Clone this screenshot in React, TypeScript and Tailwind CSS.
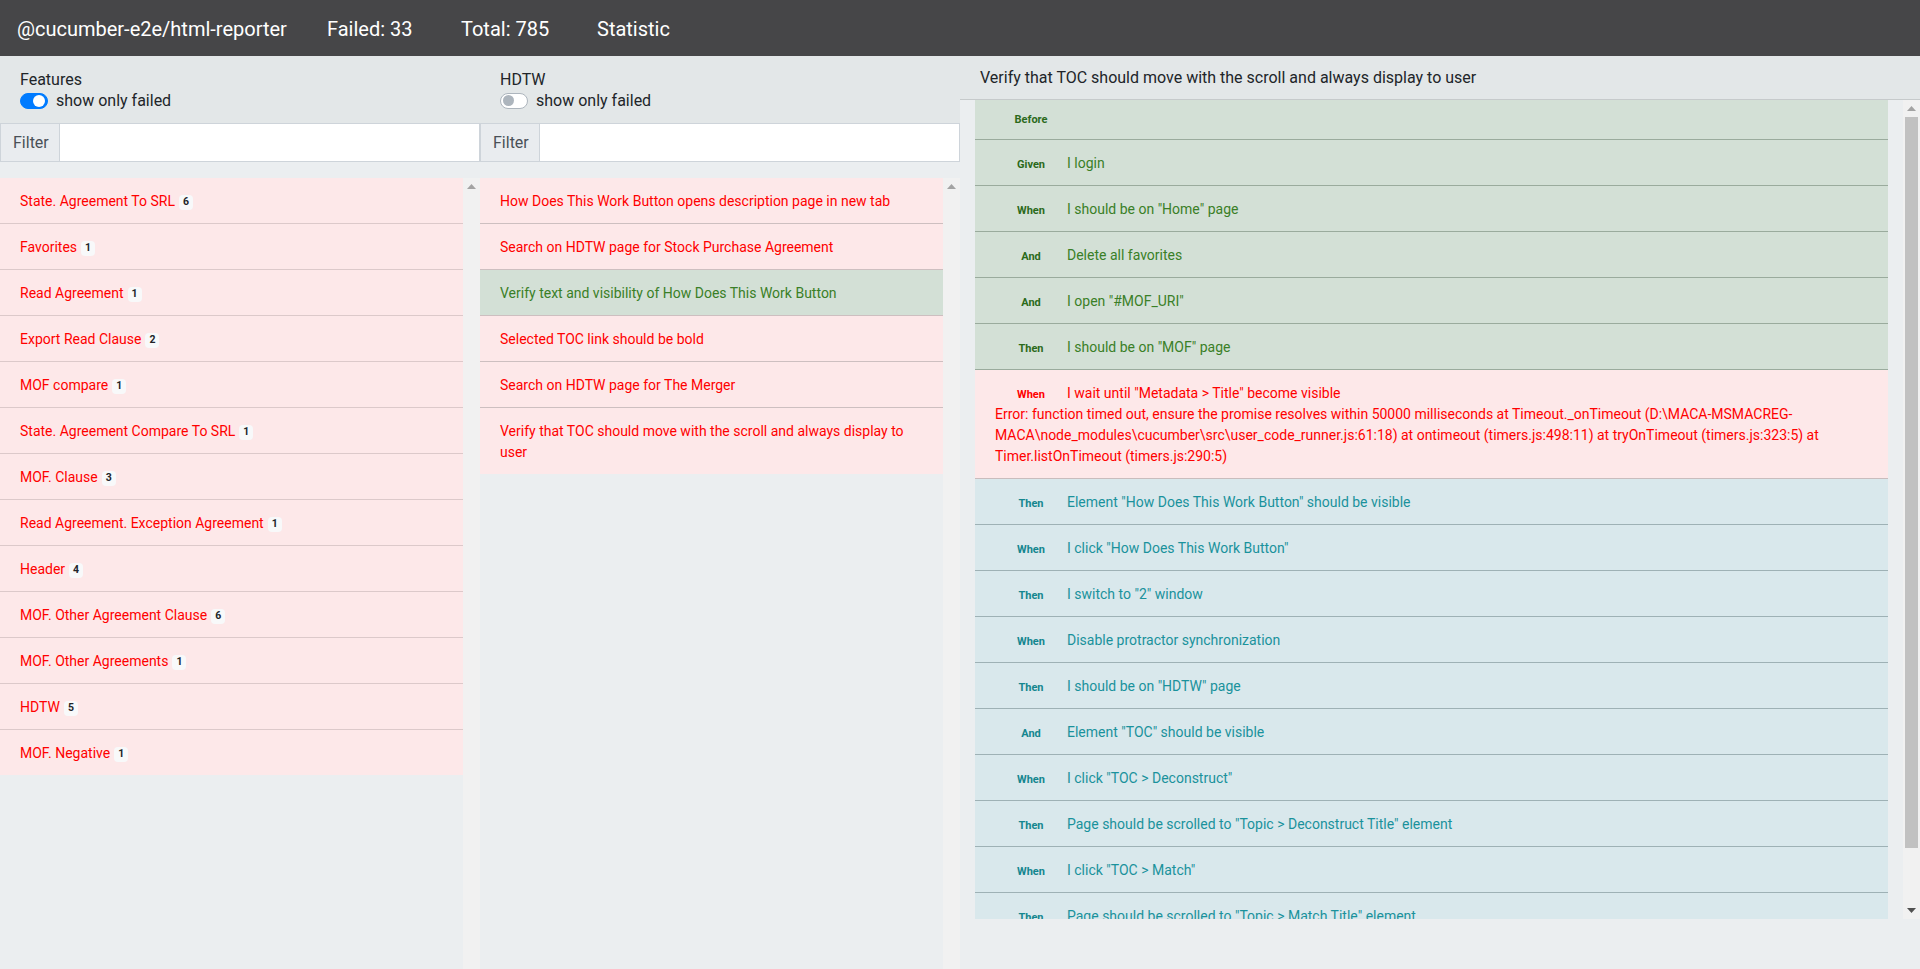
import React from "react";

type Feature = { name: string; count: number };

const features: Feature[] = [
  { name: "State. Agreement To SRL", count: 6 },
  { name: "Favorites", count: 1 },
  { name: "Read Agreement", count: 1 },
  { name: "Export Read Clause", count: 2 },
  { name: "MOF compare", count: 1 },
  { name: "State. Agreement Compare To SRL", count: 1 },
  { name: "MOF. Clause", count: 3 },
  { name: "Read Agreement. Exception Agreement", count: 1 },
  { name: "Header", count: 4 },
  { name: "MOF. Other Agreement Clause", count: 6 },
  { name: "MOF. Other Agreements", count: 1 },
  { name: "HDTW", count: 5 },
  { name: "MOF. Negative", count: 1 },
];

const scenarios: { name: string; passed: boolean }[] = [
  { name: "How Does This Work Button opens description page in new tab", passed: false },
  { name: "Search on HDTW page for Stock Purchase Agreement", passed: false },
  { name: "Verify text and visibility of How Does This Work Button", passed: true },
  { name: "Selected TOC link should be bold", passed: false },
  { name: "Search on HDTW page for The Merger", passed: false },
  { name: "Verify that TOC should move with the scroll and always display to user", passed: false },
];

type Status = "passed" | "failed" | "skipped";
type Step = { kw: string; text: string; status: Status; error?: string };

const steps: Step[] = [
  { kw: "Before", text: "", status: "passed" },
  { kw: "Given", text: "I login", status: "passed" },
  { kw: "When", text: 'I should be on "Home" page', status: "passed" },
  { kw: "And", text: "Delete all favorites", status: "passed" },
  { kw: "And", text: 'I open "#MOF_URI"', status: "passed" },
  { kw: "Then", text: 'I should be on "MOF" page', status: "passed" },
  {
    kw: "When",
    text: 'I wait until "Metadata > Title" become visible',
    status: "failed",
    error:
      "Error: function timed out, ensure the promise resolves within 50000 milliseconds at Timeout._onTimeout (D:\\MACA-MSMACREG-MACA\\node_modules\\cucumber\\src\\user_code_runner.js:61:18) at ontimeout (timers.js:498:11) at tryOnTimeout (timers.js:323:5) at Timer.listOnTimeout (timers.js:290:5)",
  },
  { kw: "Then", text: 'Element "How Does This Work Button" should be visible', status: "skipped" },
  { kw: "When", text: 'I click "How Does This Work Button"', status: "skipped" },
  { kw: "Then", text: 'I switch to "2" window', status: "skipped" },
  { kw: "When", text: "Disable protractor synchronization", status: "skipped" },
  { kw: "Then", text: 'I should be on "HDTW" page', status: "skipped" },
  { kw: "And", text: 'Element "TOC" should be visible', status: "skipped" },
  { kw: "When", text: 'I click "TOC > Deconstruct"', status: "skipped" },
  { kw: "Then", text: 'Page should be scrolled to "Topic > Deconstruct Title" element', status: "skipped" },
  { kw: "When", text: 'I click "TOC > Match"', status: "skipped" },
  { kw: "Then", text: 'Page should be scrolled to "Topic > Match Title" element', status: "skipped" },
  { kw: "After", text: "", status: "passed" },
];

function Arrow({ up, color }: { up: boolean; color: string }) {
  return (
    <div className="h-[17px] flex items-center justify-center shrink-0">
      <svg width="9" height="5" viewBox="0 0 9 5">
        {up ? <path d="M4.5 0 L9 5 L0 5 Z" fill={color} /> : <path d="M0 0 L9 0 L4.5 5 Z" fill={color} />}
      </svg>
    </div>
  );
}

function ScrollBar({ thumb }: { thumb?: number }) {
  return (
    <div className="w-[17px] shrink-0 bg-[#f1f1f1] flex flex-col">
      <Arrow up color="#a3a3a3" />
      {thumb ? (
        <>
          <div className="mx-[2px] bg-[#c1c1c1] shrink-0" style={{ height: thumb }} />
          <div className="flex-1" />
          <Arrow up={false} color="#505050" />
        </>
      ) : null}
    </div>
  );
}

function Toggle({ on }: { on: boolean }) {
  return on ? (
    <span className="inline-flex items-center justify-end w-[28px] h-[16px] rounded-full bg-[#007bff] border border-[#007bff] px-[2px]">
      <span className="block w-[12px] h-[12px] rounded-full bg-white" />
    </span>
  ) : (
    <span className="inline-flex items-center justify-start w-[28px] h-[16px] rounded-full bg-white border border-[#adb5bd] px-[2px]">
      <span className="block w-[11px] h-[11px] rounded-full bg-[#adb5bd]" />
    </span>
  );
}

function PanelHeader({ title, on }: { title: string; on: boolean }) {
  return (
    <div className="bg-[#e3e7e8] pl-5 pt-[15px] pb-[11px] text-[16px] text-[#212529]">
      <div className="leading-[18px]">{title}</div>
      <div className="flex items-center gap-2 h-[23px]">
        <Toggle on={on} />
        <span>show only failed</span>
      </div>
    </div>
  );
}

function FilterInput() {
  return (
    <div className="flex h-[39px] text-[16px]">
      <div className="w-[60px] flex items-center pl-3 bg-[#e9ecef] border border-[#ced4da] text-[#495057]">
        Filter
      </div>
      <div className="flex-1 bg-white border border-l-0 border-[#ced4da]" />
    </div>
  );
}

const stepStyle: Record<Status, { row: string; kw: string; text: string }> = {
  passed: {
    row: "bg-[#d3e0d6] border-[#9aab9d]",
    kw: "text-[#2b6a1b]",
    text: "text-[#3a7f27]",
  },
  failed: {
    row: "bg-[#fde8e9] border-[#c9bcbd]",
    kw: "text-[#ff0000]",
    text: "text-[#ff0000]",
  },
  skipped: {
    row: "bg-[#d9e8ec] border-[#9eb1b5]",
    kw: "text-[#14868f]",
    text: "text-[#1a929c]",
  },
};

export default function App() {
  return (
    <div className="h-[969px] w-[1920px] flex flex-col bg-[#ebeef0] font-[Roboto,'Open_Sans',sans-serif] overflow-hidden">
      {/* Top bar */}
      <div className="h-[56px] shrink-0 bg-[#464648] text-white text-[20px] flex items-center pl-[17px] pt-[1px]">
        <span className="w-[310px]">@cucumber-e2e/html-reporter</span>
        <span className="w-[134px]">Failed: 33</span>
        <span className="w-[136px]">Total: 785</span>
        <span>Statistic</span>
      </div>

      <div className="flex flex-1 min-h-0">
        {/* Features column */}
        <div className="w-[480px] flex flex-col min-h-0">
          <PanelHeader title="Features" on={true} />
          <FilterInput />
          <div className="mt-4 flex-1 min-h-0 flex">
            <div className="flex-1 min-w-0 overflow-hidden">
              {features.map((f, i) => (
                <div
                  key={i}
                  className={`bg-[#fde8e9] px-5 pt-[13px] pb-[11px] text-[14px] leading-[21px] text-[#ff0000] ${
                    i < features.length - 1 ? "border-b border-[#dcc9ca]" : ""
                  }`}
                >
                  {f.name}
                  <span className="ml-1 inline-block align-[1px] bg-[#f8f9fa] text-[#212529] font-bold text-[10.5px] leading-none px-[4px] py-[2px] rounded-[4px]">
                    {f.count}
                  </span>
                </div>
              ))}
            </div>
            <ScrollBar />
          </div>
        </div>

        {/* Scenarios column */}
        <div className="w-[480px] flex flex-col min-h-0">
          <PanelHeader title="HDTW" on={false} />
          <FilterInput />
          <div className="mt-4 flex-1 min-h-0 flex">
            <div className="flex-1 min-w-0 overflow-hidden">
              {scenarios.map((s, i) => (
                <div
                  key={i}
                  className={`px-5 pt-[13px] pb-[11px] text-[14px] leading-[21px] ${
                    s.passed ? "bg-[#d3e0d6] text-[#3a7f27]" : "bg-[#fde8e9] text-[#ff0000]"
                  } ${i < scenarios.length - 1 ? "border-b border-[#cdbfc0]" : ""}`}
                >
                  {s.name}
                </div>
              ))}
            </div>
            <ScrollBar />
          </div>
        </div>

        {/* Steps column */}
        <div className="flex-1 flex flex-col min-h-0">
          <div className="h-[44px] shrink-0 bg-[#e3e7e8] border-b border-[#c6cacb] flex items-center pl-5 text-[16px] text-[#212529]">
            Verify that TOC should move with the scroll and always display to user
          </div>
          <div className="h-[819px] shrink-0 flex">
            <div className="flex-1 min-w-0 overflow-hidden px-[15px]">
              {steps.map((s, i) => {
                const st = stepStyle[s.status];
                if (!s.text) {
                  return (
                    <div key={i} className={`h-[40px] flex items-center px-5 border-b ${st.row}`}>
                      <span className={`inline-block w-[72px] text-center text-[11px] leading-none font-bold ${st.kw}`}>
                        {s.kw}
                      </span>
                    </div>
                  );
                }
                return (
                  <div key={i} className={`px-5 pt-[13px] pb-[11px] border-b text-[14px] leading-[21px] ${st.row}`}>
                    <div>
                      <span className={`inline-block w-[72px] text-center text-[11px] leading-none font-bold ${st.kw}`}>
                        {s.kw}
                      </span>
                      <span className={st.text}>{s.text}</span>
                    </div>
                    {s.error && <div className="text-[#ff0000] break-words">{s.error}</div>}
                  </div>
                );
              })}
            </div>
            <ScrollBar thumb={731} />
          </div>
        </div>
      </div>
    </div>
  );
}
